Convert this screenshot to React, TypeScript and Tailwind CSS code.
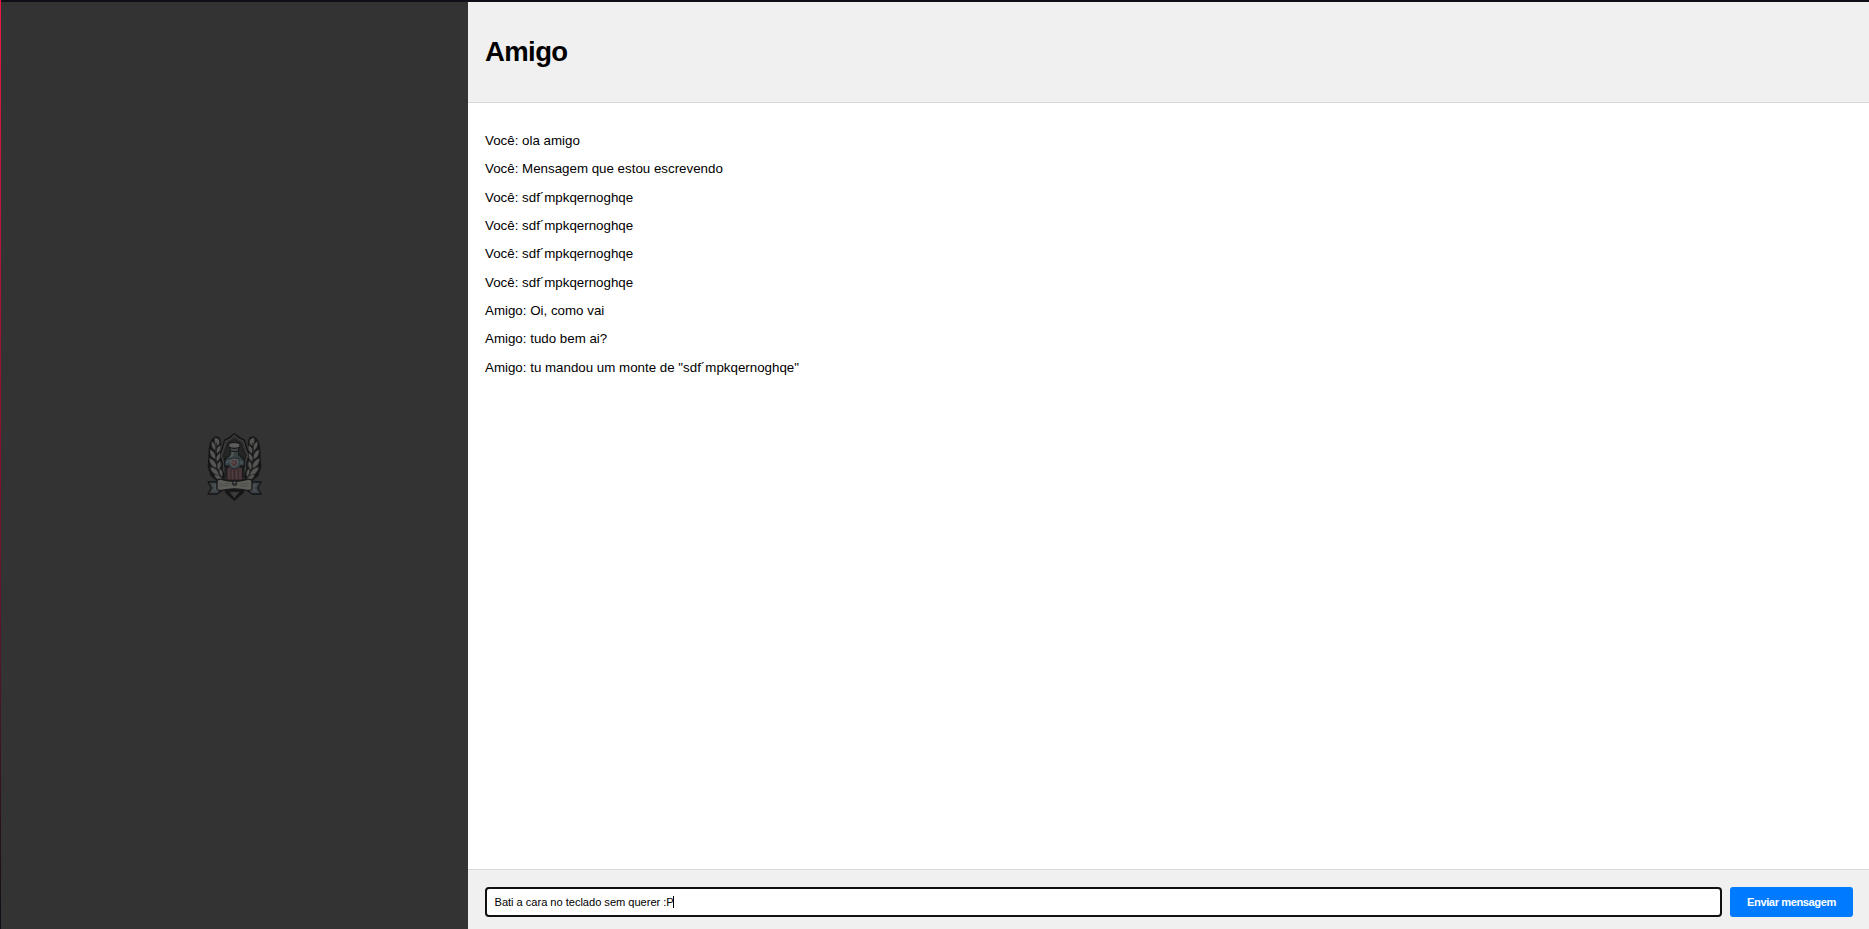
const messages = [
  'Você: ola amigo',
  'Você: Mensagem que estou escrevendo',
  'Você: sdf´mpkqernoghqe',
  'Você: sdf´mpkqernoghqe',
  'Você: sdf´mpkqernoghqe',
  'Você: sdf´mpkqernoghqe',
  'Amigo: Oi, como vai',
  'Amigo: tudo bem ai?',
  'Amigo: tu mandou um monte de "sdf´mpkqernoghqe"',
];

// One laurel branch; the opposite side is mirrored.
function Laurel() {
  return (
    <g>
      <path d="M56 54 L66 48 L78 53 L82 72 L76 94 L82 116 L80 138 L90 158 L92 182 L70 184 L50 168 L41 140 L43 112 L44 88 L48 66Z" fill="#151616" />
      <g fill="#555653" stroke="#222322" strokeWidth="1.5">
        <path d="M62 53 Q80 53 76 73 L67 78 Q59 67 62 53Z" />
        <path d="M53 64 Q68 72 67 94 Q48 84 53 64Z" />
        <path d="M79 75 Q84 91 69 101 Q63 84 79 75Z" />
        <path d="M48 88 Q66 96 67 119 Q45 112 48 88Z" />
        <path d="M78 98 Q84 114 68 126 Q62 109 78 98Z" />
        <path d="M46 114 Q67 121 69 145 Q46 140 46 114Z" />
        <path d="M78 122 Q86 137 72 151 Q63 135 78 122Z" />
        <path d="M48 141 Q71 143 77 167 Q53 165 48 141Z" />
        <path d="M77 145 Q92 156 83 172 Q71 161 77 145Z" />
        <path d="M60 164 Q78 161 87 181 Q68 184 60 164Z" />
      </g>
      <path d="M68 68 Q61 94 67 130 Q70 158 88 178" fill="none" stroke="#222322" strokeWidth="2.5" />
    </g>
  );
}

function Emblem() {
  return (
    <svg viewBox="0 0 240 270" className="mr-[1px] mb-[1px] h-[90px] w-[80px]" aria-hidden="true">
      <path d="M121 38 L138 51 L153 59 L159 80 L169 106 L160 131 L164 164 L149 219 L121 243 L94 219 L78 164 L83 131 L74 106 L84 80 L90 59 L105 51Z" fill="#151617" />
      <path d="M121 45 L134 57 L148 63 L154 85 L162 106 L154 130 L158 170 L122 190 L85 170 L89 130 L81 106 L89 85 L95 63 L109 57Z" fill="#302f30" stroke="#454343" strokeWidth="3" />
      <path d="M121 57 L140 69 L147 87 L155 107 L147 131 L151 172 L92 172 L96 131 L88 107 L96 87 L102 69Z" fill="#252525" stroke="#151617" strokeWidth="2" />
      <path d="M101 213 L121 238 L142 213Z" fill="#353436" stroke="#151617" strokeWidth="4" />
      <path d="M116 218 H127 L121 227Z" fill="#454445" />
      <Laurel />
      <g transform="translate(243 0) scale(-1 1)"><Laurel /></g>
      <path d="M104 70 Q121 62 138 70 L139 82 L134 87 L135 104 L152 116 L154 139 L146 145 V182 H98 V145 L89 138 L91 116 L107 104 L108 87 L103 82Z" fill="#151719" />
      <path d="M106 72 Q121 66 136 72 V80 Q121 86 106 80Z" fill="#5b5c5b" />
      <path d="M110 85 Q121 89 132 85 V91 Q121 95 110 91Z" fill="#454949" />
      <path d="M110 94 Q121 98 132 94 V105 L147 118 H96 L110 105Z" fill="#394043" />
      <path d="M113 96 H119 V108 L106 115 L111 106Z" fill="#505656" />
      <path d="M96 118 Q121 110 148 118 L151 134 Q144 139 139 136 L134 143 Q122 150 108 143 L104 136 Q99 140 92 134Z" fill="#363f44" stroke="#202629" strokeWidth="2" />
      <path d="M94 127 L103 117 L108 123 L100 132Z M140 119 L149 128 L141 134 L136 126Z" fill="#465156" />
      <path d="M100 143 L108 142 Q121 154 134 142 L144 143 V179 H100Z" fill="#443235" />
      <path d="M105 149 V176 M115 152 V177 M128 151 V177 M138 148 V176" stroke="#544143" strokeWidth="3" />
      <path d="M110 149 V178 M121 151 V178 M133 148 V178" stroke="#32272a" strokeWidth="2" />
      <path d="M111 120 Q121 115 131 120 V131 Q128 139 121 142 Q113 138 110 131Z" fill="#493638" stroke="#5e6567" strokeWidth="3" />
      <path d="M117 122 L124 120 L121 134 L115 130Z" fill="#5e4948" />
      <g fill="#3c4145" stroke="#131516" strokeWidth="4" strokeLinejoin="round">
        <path d="M42 186 L73 185 L81 213 L69 222 H42 L52 204Z" />
        <path d="M201 186 L170 185 L162 213 L174 222 H201 L191 204Z" />
      </g>
      <path d="M54 192 L68 192 L72 210 L54 216 L61 204Z M189 192 L175 192 L171 210 L189 216 L182 204Z" fill="#484e52" />
      <path d="M69 183 Q73 176 82 178 Q121 190 161 178 Q170 176 174 183 V207 Q170 213 159 211 Q121 202 84 211 Q73 213 69 207Z" fill="#5c5b57" stroke="#171817" strokeWidth="4" />
      <path d="M76 184 Q121 195 168 184 M76 205 Q121 196 167 205" fill="none" stroke="#656560" strokeWidth="2" />
      <path d="M78 195 L104 197 M90 189 L112 192 M137 193 L165 190 M139 200 L161 198" fill="none" stroke="#484945" strokeWidth="2" />
      <circle cx="122" cy="190" r="7" fill="#303234" stroke="#1a1b1b" strokeWidth="2" />
      <path d="M118 188 L123 184 L124 190Z" fill="#66676a" />
    </svg>
  );
}

export default function App() {
  return (
    <div className="flex h-screen w-full flex-col overflow-hidden bg-white font-['Liberation_Sans',Arial,sans-serif] text-black">
      <div className="flex h-[2px] shrink-0">
        <div className="w-px bg-[#ed1746]" />
        <div className="flex-1 bg-[#100e17]" />
      </div>
      <div className="flex min-h-0 flex-1">
        <div className="w-px shrink-0 bg-linear-to-b from-[#ed1746] via-[#83102f] to-[#100e17]" />
        <aside className="flex w-[467px] shrink-0 items-center justify-center bg-[#333]">
          <Emblem />
        </aside>
        <main className="flex min-w-0 flex-1 flex-col">
          <header className="h-[101px] shrink-0 border-b border-[#d9d9d9] bg-[#f0f0f0] px-[17px] pt-[34px]">
            <h1 className="text-[27.5px] leading-[31px] font-bold tracking-[-0.6px]">Amigo</h1>
          </header>
          <section className="flex flex-1 flex-col gap-[13.333px] px-[17px] pt-[30px] text-[13.333px] leading-[15px]">
            {messages.map((message, index) => <p key={index}>{message}</p>)}
          </section>
          <form className="flex h-[60px] shrink-0 gap-[8px] border-t border-[#d9d9d9] bg-[#f0f0f0] px-[16px] pt-[17px] pl-[17px]" onSubmit={(event) => event.preventDefault()}>
            <div className="flex h-[30px] flex-1 items-center rounded-[4px] border-2 border-[#101010] bg-white px-[7.5px] text-[11.111px] tracking-[-0.03px]">
              <span>Bati a cara no teclado sem querer :P</span>
              <span className="-ml-px h-[12px] w-px bg-black" />
            </div>
            <button className="h-[30px] w-[123px] rounded-[3px] bg-[#007bff] text-[11.111px] font-bold tracking-[-0.42px] text-white">Enviar mensagem</button>
          </form>
        </main>
      </div>
    </div>
  );
}
